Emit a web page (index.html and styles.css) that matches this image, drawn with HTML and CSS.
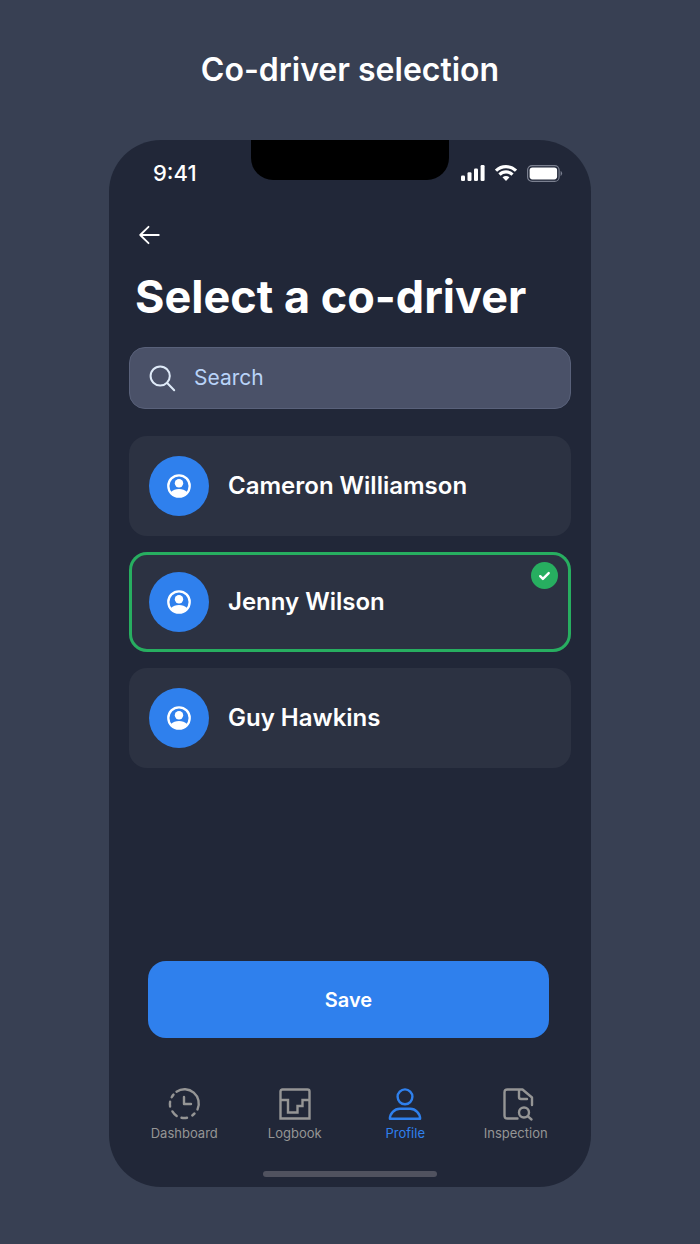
FILE: index.html
```html
<!DOCTYPE html>
<html lang="en">
<head>
<meta charset="utf-8">
<meta name="viewport" content="width=device-width, initial-scale=1">
<title>Co-driver selection</title>
<link rel="stylesheet" href="styles.css">
</head>
<body>
<svg class="sprite" aria-hidden="true">
  <symbol id="user" viewBox="0 0 24 24">
    <circle cx="12" cy="12" r="10.700" fill="none" stroke="currentColor" stroke-width="2.300"/>
    <circle cx="12" cy="9.300" r="4.200" fill="currentColor"/>
    <path d="M3.800 18.200C6 15.800 8.800 14.900 12 14.900s6 .9 8.200 3.300C18.200 21.100 15.400 22.600 12 22.600s-6.200-1.500-8.200-4.400z" fill="currentColor"/>
  </symbol>
</svg>
<p class="caption">Co-driver selection</p>
<main class="phone">
  <header class="status">
    <span class="time">9:41</span>
    <span class="notch"></span>
    <span class="signals">
      <svg width="24" height="16" viewBox="0 0 24 16" fill="#fff" aria-hidden="true">
        <rect x="0" y="10.500" width="4" height="5.500" rx="1.200"/><rect x="6.500" y="7.300" width="4" height="8.700" rx="1.200"/><rect x="13" y="3.500" width="4" height="12.500" rx="1.200"/><rect x="19.600" y="0" width="4" height="16" rx="1.200"/>
      </svg>
      <svg width="22" height="16" viewBox="0 0 22 16" fill="none" stroke="#fff" stroke-width="3.200" aria-hidden="true">
        <path d="M1 5.700A14.300 14.300 0 0 1 21 5.700"/><path d="M4.500 9.600A9.300 9.300 0 0 1 17.500 9.600"/><path d="M11 15.900L7.500 12.300Q11 9.700 14.500 12.300Z" fill="#fff" stroke="none"/>
      </svg>
      <svg width="36" height="17" viewBox="0 0 36 17" aria-hidden="true">
        <rect x=".6" y=".6" width="31.500" height="15.800" rx="4.500" fill="none" stroke="#7b8090" stroke-width="1.200"/><rect x="2.600" y="2.600" width="27.500" height="11.800" rx="2.800" fill="#fff"/><path d="M33.600 5.800q3 2.700 0 5.400z" fill="#7b8090"/>
      </svg>
    </span>
  </header>

  <button class="back" type="button" aria-label="Back">
    <svg width="22" height="20" viewBox="0 0 22 20" fill="none" stroke="#fff" stroke-width="1.800" stroke-linecap="round" stroke-linejoin="round" aria-hidden="true"><path d="M19.800 10H1.200M9.500 1.800L1.200 10l8.300 8.200"/></svg>
  </button>
  <h1 class="heading">Select a co-driver</h1>

  <label class="search">
    <svg width="27" height="27" viewBox="0 0 27 27" fill="none" stroke="#dfeaf8" stroke-width="2" stroke-linecap="round" aria-hidden="true"><circle cx="11.200" cy="11" r="9.600"/><path d="M18.200 18l7 7.200"/></svg>
    <input class="search-input" type="text" placeholder="Search" aria-label="Search">
  </label>

  <div class="drivers" role="radiogroup" aria-label="Co-driver">
    <label class="driver">
      <input class="choice" type="radio" name="driver">
      <span class="avatar"><svg width="24" height="24"><use href="#user"/></svg></span>
      <span>Cameron Williamson</span>
    </label>
    <label class="driver selected">
      <input class="choice" type="radio" name="driver" checked>
      <span class="avatar"><svg width="24" height="24"><use href="#user"/></svg></span>
      <span>Jenny Wilson</span>
      <span class="badge"><svg width="13" height="10" viewBox="0 0 13 10" fill="none" stroke="#fff" stroke-width="2.400" stroke-linecap="round" stroke-linejoin="round"><path d="M2.200 5.200l2.700 2.700 5.800-5.800"/></svg></span>
    </label>
    <label class="driver">
      <input class="choice" type="radio" name="driver">
      <span class="avatar"><svg width="24" height="24"><use href="#user"/></svg></span>
      <span>Guy Hawkins</span>
    </label>
  </div>

  <button class="save" type="button">Save</button>

  <nav class="tabs">
    <a class="tab" href="#dashboard">
      <svg class="tab-icon" viewBox="0 0 32 32"><path d="M8.500 3.700A14.300 14.300 0 0 1 29.500 21.500"/><path d="M26.500 25.500l-2.200 2M19 29.800a14.300 14.300 0 0 1-5.500 0M8.700 28a14.300 14.300 0 0 1-4.300-4.600M2.100 18.500a14.300 14.300 0 0 1 0-4.800M3.700 9.200a14.300 14.300 0 0 1 1.800-2.600M16 9v7h7"/></svg>
      <span>Dashboard</span>
    </a>
    <a class="tab" href="#logbook">
      <svg class="tab-icon square" viewBox="0 0 32 32"><path d="M1.500 30.500V3.500q0-2 2-2h25q2 0 2 2v27z"/><path d="M1.500 12H9v12.500h9.500V18h5v-6h7"/></svg>
      <span>Logbook</span>
    </a>
    <a class="tab active" href="#profile" aria-current="page">
      <svg class="tab-icon" viewBox="0 0 32 32"><circle cx="16" cy="8.800" r="7.400"/><path d="M.9 30.700h30.200c0-5.200-4.500-9.900-9.900-9.900H10.800C5.400 20.800.9 25.500.9 30.700z"/></svg>
      <span>Profile</span>
    </a>
    <a class="tab" href="#inspection">
      <svg class="tab-icon" viewBox="-2 0 32 32"><path d="M15.500 30.500H5.500q-3 0-3-3v-23q0-3 3-3h15l9.500 8V17M17 1.500V9q0 2 2 2h6"/><circle cx="22" cy="24.500" r="5"/><path d="M25.700 28.200l3.800 3.300"/></svg>
      <span>Inspection</span>
    </a>
  </nav>
  <div class="home-bar"></div>
</main>
</body>
</html>
```

FILE: styles.css
```css
* {
  box-sizing: border-box;
}

body {
  margin: 0;
  min-height: 100vh;
  padding: 46px 109px 56px;
  background: #384053;
  color: #fff;
  font-family: Inter, "Liberation Sans", sans-serif;
}

button,
input {
  font: inherit;
  color: inherit;
  border: 0;
}

.sprite {
  position: absolute;
  width: 0;
  height: 0;
}

.caption {
  margin: 0 0 46px;
  text-align: center;
  font-size: 32px;
  line-height: 48px;
  font-weight: 600;
}

.phone {
  display: flex;
  flex-direction: column;
  padding: 0 20px 10px;
  border-radius: 52px;
  background: #212738;
}

.status {
  display: grid;
  grid-template-columns: 1fr 198px 1fr;
  height: 68px;
}

.time {
  padding: 19px 0 0 24px;
  font-size: 22px;
  line-height: 28px;
  font-weight: 500;
}

.notch {
  height: 40px;
  border-radius: 0 0 22px 22px;
  background: #000;
}

.signals {
  display: flex;
  justify-content: flex-end;
  align-items: center;
  gap: 10px;
  height: 66px;
  padding-right: 8px;
}

.back {
  align-self: flex-start;
  display: flex;
  margin-top: 12px;
  padding: 5px 10px;
  background: none;
}

.back svg {
  display: block;
}

.heading {
  margin: 19px 6px 22px;
  font-size: 45px;
  line-height: 56px;
  font-weight: 700;
  white-space: nowrap;
}

.search {
  display: flex;
  align-items: center;
  gap: 18px;
  height: 62px;
  padding: 0 19px;
  border: 1px solid #59617a;
  border-radius: 16px;
  background: #4a5168;
}

.search-input {
  flex: 1;
  min-width: 0;
  padding: 0;
  outline: 0;
  background: none;
  font-size: 21px;
  line-height: 28px;
}

.search-input::placeholder {
  color: #b9d3f8;
  opacity: 1;
}

.drivers {
  display: grid;
  gap: 16px;
  margin-top: 27px;
}

.driver {
  position: relative;
  display: flex;
  align-items: center;
  gap: 19px;
  min-height: 100px;
  padding: 0 20px;
  border-radius: 18px;
  background: #2c3242;
  font-size: 24px;
  line-height: 32px;
  font-weight: 600;
}

.selected {
  box-shadow: inset 0 0 0 3px #27ae60;
}

.choice {
  position: absolute;
  inset: 0;
  margin: 0;
  appearance: none;
}

.avatar,
.badge {
  display: grid;
  place-items: center;
  border-radius: 50%;
}

.avatar {
  width: 60px;
  height: 60px;
  background: #2f80ed;
}

.avatar svg {
  overflow: visible;
}

.badge {
  position: absolute;
  top: 10px;
  right: 13px;
  width: 27px;
  height: 27px;
  background: #27ae60;
}

.save {
  height: 77px;
  margin: 193px 22px 50px 19px;
  padding: 0;
  border-radius: 18px;
  background: #2f80ed;
  font-size: 20px;
  font-weight: 600;
}

.tabs {
  display: grid;
  grid-template-columns: repeat(4, 1fr);
}

.tab {
  display: grid;
  justify-items: center;
  gap: 4px;
  color: #959595;
  font-size: 13px;
  line-height: 18px;
  text-decoration: none;
}

.active {
  color: #2f80ed;
}

.tab-icon {
  width: 32px;
  height: 32px;
  overflow: visible;
  fill: none;
  stroke: currentColor;
  stroke-width: 2.4;
  stroke-linecap: round;
  stroke-linejoin: round;
}

.square {
  stroke-linecap: butt;
  stroke-linejoin: miter;
}

.home-bar {
  align-self: center;
  width: 174px;
  height: 6px;
  margin-top: 29px;
  border-radius: 3px;
  background: #50525f;
}
```
